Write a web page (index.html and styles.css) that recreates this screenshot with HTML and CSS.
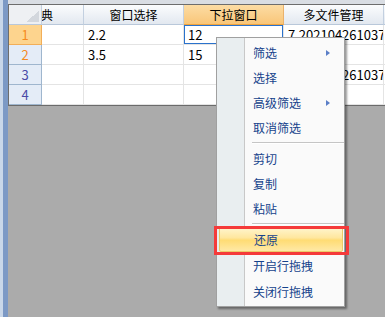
FILE: index.html
```html
<!DOCTYPE html>
<html>
<head>
<meta charset="utf-8">
<link rel="stylesheet" href="styles.css">
</head>
<body>
<div class="app">
  <div class="strip"></div>
  <div class="main">
    <div class="topbar"></div>
    <div class="grid">
      <div class="corner"></div>
      <div class="hd clip"><span class="clip-txt">典</span></div>
      <div class="hd">窗口选择</div>
      <div class="hd hd-active">下拉窗口</div>
      <div class="hd">多文件管理</div>
      <div class="hd"></div>

      <div class="rh rh-active">1</div>
      <div class="cell"></div>
      <div class="cell">2.2</div>
      <div class="cell cell-sel">12</div>
      <div class="cell">7.202104261037</div>
      <div class="cell"></div>

      <div class="rh rh-orange">2</div>
      <div class="cell"></div>
      <div class="cell">3.5</div>
      <div class="cell">15</div>
      <div class="cell"></div>
      <div class="cell"></div>

      <div class="rh">3</div>
      <div class="cell"></div>
      <div class="cell"></div>
      <div class="cell"></div>
      <div class="cell">7.202104261037</div>
      <div class="cell"></div>

      <div class="rh">4</div>
      <div class="cell"></div>
      <div class="cell"></div>
      <div class="cell"></div>
      <div class="cell"></div>
      <div class="cell"></div>
    </div>
    <div class="empty"></div>
  </div>
</div>

<div class="menu">
  <div class="item"><span>筛选</span><i class="arrow"></i></div>
  <div class="item"><span>选择</span></div>
  <div class="item"><span>高级筛选</span><i class="arrow"></i></div>
  <div class="item"><span>取消筛选</span></div>
  <div class="sep"></div>
  <div class="item"><span>剪切</span></div>
  <div class="item"><span>复制</span></div>
  <div class="item"><span>粘贴</span></div>
  <div class="sep sep2"></div>
  <div class="item tall hot"><span>还原</span></div>
  <div class="item tall"><span>开启行拖拽</span></div>
  <div class="item tall"><span>关闭行拖拽</span></div>
</div>
<div class="redbox"></div>
</body>
</html>
```

FILE: styles.css
```css
* { box-sizing: border-box; }
html, body {
  margin: 0;
  padding: 0;
  width: 385px;
  height: 317px;
  overflow: hidden;
  font-family: "Noto Sans CJK SC", "Microsoft YaHei", sans-serif;
  font-size: 12px;
}
.app {
  display: flex;
  width: 385px;
  height: 317px;
}
.strip {
  width: 8px;
  flex: none;
  background: linear-gradient(to right, #c9d7e9 0 3px, #7c99c5 3px 8px);
}
.main {
  flex: 1;
  display: flex;
  flex-direction: column;
  overflow: hidden;
  min-width: 0;
}
.topbar {
  height: 4px;
  flex: none;
  background: #d9dde3;
}
.grid {
  flex: none;
  display: grid;
  grid-template-columns: 33px 42px 100px 100px 100px 100px;
  grid-auto-rows: 20px;
  border-top: 1px solid #6d6d6d;
  border-left: 1px solid #6d6d6d;
  width: 476px;
  background: #fff;
}
.corner {
  background-color: #eef0f3;
  background-image: linear-gradient(to bottom right, transparent 50%, #d3d7dd 50%);
  background-size: 13px 11px;
  background-position: right 2px bottom 2px;
  background-repeat: no-repeat;
  border-right: 1px solid #c3d0e0;
  border-bottom: 1px solid #b9c8da;
}
.hd {
  display: flex;
  align-items: center;
  justify-content: center;
  background: linear-gradient(#fbfcfd, #e2e8f0);
  border-right: 1px solid #c3d0e0;
  border-bottom: 1px solid #b9c8da;
  color: #000;
  white-space: nowrap;
  overflow: hidden;
}
.hd.clip { justify-content: flex-start; }
.clip-txt { margin-left: -1px; }
.hd-active {
  background: linear-gradient(#fcdca4, #f9c679);
  border-right: 1px solid #eab26c;
  border-bottom: 1px solid #f0a43e;
}
.rh {
  display: flex;
  align-items: center;
  justify-content: center;
  background: #e4ecf7;
  border-right: 1px solid #9fb6ce;
  border-bottom: 1px solid #9fb6ce;
  color: #4a4aa6;
  font-size: 13px;
}
.rh-orange { color: #f58a1f; }
.rh-active {
  background: #fdd48e;
  border-right: 1px solid #f2ae58;
  border-bottom: 1px solid #f2ae58;
  color: #f58a1f;
}
.cell {
  display: flex;
  align-items: center;
  padding-left: 4px;
  border-right: 1px solid #e4e4e4;
  border-bottom: 1px solid #e4e4e4;
  white-space: nowrap;
  overflow: hidden;
  color: #000;
  font-size: 13px;
}
.cell-sel {
  box-shadow: inset 0 0 0 1px #2a72cc;
}
.empty {
  flex: 1;
  background: #ababab;
  border-top: 1px solid #6b6b6b;
}

.menu {
  position: absolute;
  left: 216px;
  top: 37px;
  width: 129px;
  height: 270px;
  border: 1px solid #a0a0a0;
  padding: 2px 0;
  background: linear-gradient(to right, #e9eef0 0 27px, #c8c8c8 27px 28px, #fafafa 28px);
  box-shadow: 2px 2px 2px rgba(0, 0, 0, 0.4);
  color: #15428b;
}
.item {
  height: 25px;
  display: flex;
  align-items: center;
  justify-content: space-between;
  padding-left: 36px;
  padding-right: 14px;
}
.item.tall { height: 26px; }
.arrow {
  width: 0;
  height: 0;
  border-left: 4px solid #5b7fc7;
  border-top: 3.5px solid transparent;
  border-bottom: 3.5px solid transparent;
}
.sep {
  height: 6px;
  margin-left: 35px;
  background: linear-gradient(transparent 2px, #c5c5c5 2px 3px, #fff 3px 4px, transparent 4px);
}
.sep2 { height: 5px; }
.hot {
  margin: 0 1px 0 2px;
  padding-left: 34px;
  background: linear-gradient(#fff6d2, #ffe79e 45%, #ffdc74 55%, #ffe9a6);
  border: 1px solid #eccb6a;
  border-radius: 2px;
}
.redbox {
  position: absolute;
  left: 214px;
  top: 226px;
  width: 135px;
  height: 29px;
  border: 3px solid #f53a3a;
}
```
